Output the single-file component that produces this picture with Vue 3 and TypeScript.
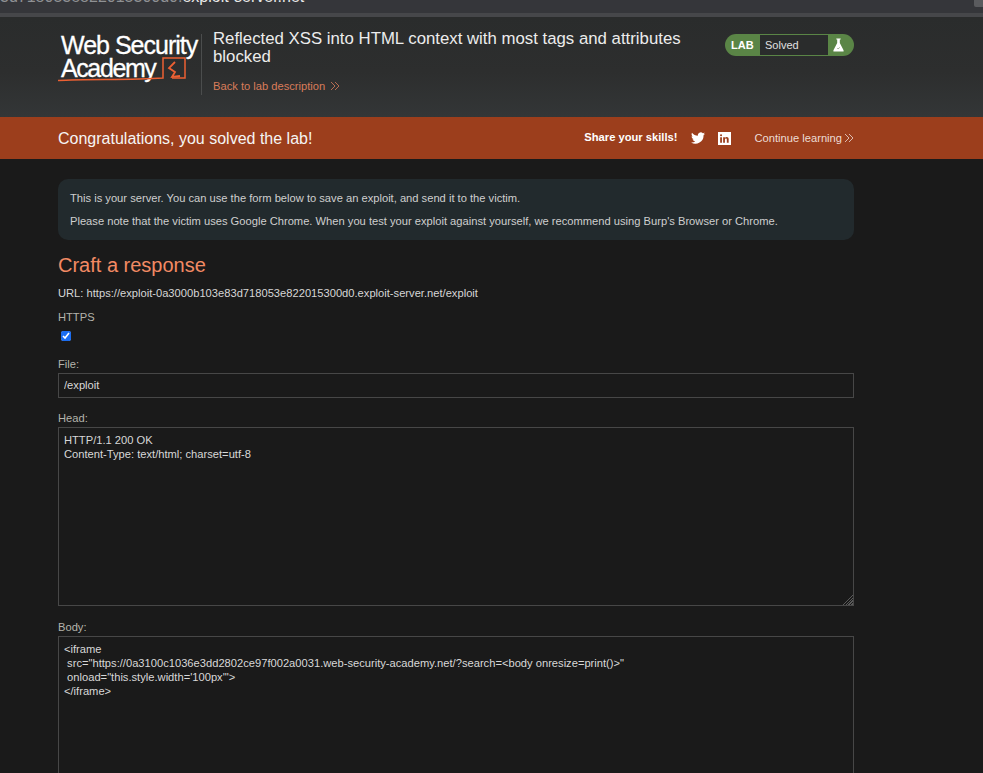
<script setup lang="ts">
import { ref } from 'vue'

const https = ref(true)
const file = ref('/exploit')
const head = ref('HTTP/1.1 200 OK\nContent-Type: text/html; charset=utf-8')
const body = ref(`<iframe
 src="https://0a3100c1036e3dd2802ce97f002a0031.web-security-academy.net/?search=<body onresize=print()>"
 onload="this.style.width='100px'">
</iframe>`)
</script>

<template>
  <div class="page">
    <div class="url-bar">
      <div class="url-text"><span class="url-dim">3d718053e822015300d0.</span>exploit-server.net</div>
      <div class="scroll-thumb"></div>
    </div>
    <div class="url-edge"></div>

    <header class="lab-header">
      <div class="wrap header-row">
        <div class="logo">
          <div class="logo-web">Web Security</div>
          <div class="logo-academy">Academy</div>
          <svg class="logo-mark" viewBox="0 0 130 44" fill="none">
            <path d="M0 38.500 C30 36.500 70 38.500 105 36 V16 H127 V36 H114" stroke="#ec6033" stroke-width="1.500" />
            <path d="M117 20 L111 26 L117 30 L114 35 L122 34" stroke="#ec6033" stroke-width="1.800" />
          </svg>
        </div>
        <div class="title-block">
          <h2 class="lab-title">Reflected XSS into HTML context with most tags and attributes blocked</h2>
          <a class="back-link" href="#">Back to lab description
            <svg class="chevrons" viewBox="0 0 10 10" fill="none"><path d="M1 1l4 4-4 4M5 1l4 4-4 4" stroke="currentColor" stroke-width="0.800" /></svg>
          </a>
        </div>
        <div class="lab-status">
          <span class="lab-word">LAB</span>
          <span class="lab-state">Solved</span>
          <span class="lab-icon">
            <svg viewBox="0 0 12 16" width="11" height="14">
              <path d="M3.500 0.500h5v1.200h-1v4l4.300 8.300v1.500H.2V14l4.300-8.300v-4h-1z" fill="#fff" />
              <path d="M4.500 11.500l1 1 2-1.800" stroke="#7c8f70" stroke-width="0.800" fill="none" />
            </svg>
          </span>
        </div>
      </div>
    </header>

    <section class="solved-bar">
      <div class="wrap solved-row">
        <h4 class="solved-msg">Congratulations, you solved the lab!</h4>
        <div class="share">
          <strong class="share-label">Share your skills!</strong>
          <svg class="social twitter" viewBox="0 0 24 24" width="14" height="14">
            <path fill="#fff" d="M24 4.560c-.9.400-1.800.660-2.800.800 1-.600 1.800-1.560 2.200-2.700-1 .560-2 .960-3.100 1.200A4.900 4.900 0 0 0 11.900 8.300C7.800 8.100 4.200 6.100 1.700 3.100c-1.300 2.300-.700 5.200 1.500 6.600-.800 0-1.600-.200-2.200-.600 0 2.400 1.700 4.500 3.900 5-.700.200-1.500.200-2.200.100.600 2 2.500 3.400 4.600 3.400A9.900 9.900 0 0 1 0 19.600 14 14 0 0 0 21.500 7.100c1-.700 1.800-1.600 2.500-2.540z" />
          </svg>
          <svg class="social linkedin" viewBox="0 0 24 24" width="13" height="13">
            <path fill="#fff" fill-rule="evenodd" d="M0 0h24v24H0zM4 9.500V20h3.300V9.500zM5.650 4.200a1.900 1.900 0 1 0 0 3.800 1.900 1.900 0 0 0 0-3.800zM9.500 9.500V20h3.300v-5.500c0-1.500.6-2.400 1.800-2.400s1.700.9 1.700 2.400V20h3.400v-6.400c0-2.900-1.500-4.400-3.700-4.400-1.500 0-2.600.7-3.200 1.700V9.500z" />
          </svg>
          <a class="continue" href="#">Continue learning
            <svg class="chevrons" viewBox="0 0 10 10" fill="none"><path d="M1 1l4 4-4 4M5 1l4 4-4 4" stroke="currentColor" stroke-width="0.800" /></svg>
          </a>
        </div>
      </div>
    </section>

    <main class="wrap content">
      <div class="info">
        <p>This is your server. You can use the form below to save an exploit, and send it to the victim.</p>
        <p>Please note that the victim uses Google Chrome. When you test your exploit against yourself, we recommend using Burp's Browser or Chrome.</p>
      </div>

      <h3 class="craft">Craft a response</h3>
      <div class="url-line">URL: https://exploit-0a3000b103e83d718053e822015300d0.exploit-server.net/exploit</div>

      <form class="exploit-form" @submit.prevent>
        <label class="field-label https-label" for="https">HTTPS</label>
        <input id="https" v-model="https" class="https-check" type="checkbox" />

        <label class="field-label file-label" for="file">File:</label>
        <input id="file" v-model="file" class="field file-input" type="text" />

        <label class="field-label" for="head">Head:</label>
        <textarea id="head" v-model="head" class="field head-area"></textarea>

        <label class="field-label" for="body">Body:</label>
        <textarea id="body" v-model="body" class="field body-area"></textarea>
      </form>
    </main>
  </div>
</template>

<style>
html,
body {
  margin: 0;
  background: #1a1a1a;
  overflow: hidden;
}
</style>

<style scoped>
* {
  box-sizing: border-box;
}

.page {
  height: 773px;
  overflow: hidden;
  background: #1a1a1a;
  color: #cfcfcf;
  font-family: "Liberation Sans", Arial, sans-serif;
  font-size: 11.170px;
}

.wrap {
  width: 796px;
  margin-left: 58px;
}

/* top strip, cut off by the window edge */
.url-bar {
  height: 13px;
  background: #35363a;
  display: flex;
  justify-content: space-between;
  overflow: hidden;
}

.url-text {
  margin-top: -13px;
  font-size: 16px;
  line-height: 20px;
  color: #e8e8e8;
  white-space: nowrap;
}

.url-dim {
  color: #8f9194;
}

.scroll-thumb {
  width: 9px;
  height: 7px;
  background: #5a5b5e;
  border-radius: 0 0 0 2px;
}

.url-edge {
  height: 4px;
  background: #46474a;
}

.lab-header {
  height: 100px;
  background: linear-gradient(180deg, #2a2c2c 0%, #2d2e2e 55%, #333637 100%);
}

.header-row {
  display: flex;
  padding-top: 13px;
}

.logo {
  position: relative;
  width: 142px;
  height: 61px;
  margin: 4px 0 0 2px;
  flex: none;
  color: #fff;
  border-right: 1px solid #4b4d4d;
  -webkit-text-stroke: 0.3px #fff;
}

.logo-web {
  font-size: 25px;
  line-height: 23px;
  letter-spacing: -1px;
  white-space: nowrap;
  margin-left: 1px;
}

.logo-academy {
  font-size: 25px;
  line-height: 23px;
  letter-spacing: -1.400px;
  white-space: nowrap;
  margin-left: 1px;
}

.logo-mark {
  position: absolute;
  left: -2px;
  top: 8px;
  width: 130px;
  height: 44px;
}

.title-block {
  width: 492px;
  margin-left: 11px;
  flex: none;
}

.lab-title {
  margin: 0;
  font-size: 16.800px;
  line-height: 18px;
  font-weight: 400;
  color: #ececec;
  height: 47px;
}

.back-link {
  display: flex;
  align-items: center;
  gap: 5px;
  margin-top: 2px;
  color: #d97c5a;
  text-decoration: none;
  line-height: 14px;
}

.chevrons {
  width: 10px;
  height: 10px;
}

.lab-status {
  margin: 4px 0 0 20px;
  width: 129px;
  height: 22px;
  display: flex;
  align-items: stretch;
  background: #5a8546;
  border-radius: 11px;
  overflow: hidden;
  flex: none;
}

.lab-word {
  width: 35px;
  padding-left: 6px;
  font-weight: 700;
  font-size: 11px;
  line-height: 22px;
  color: #fff;
}

.lab-state {
  width: 68px;
  margin: 1px 0;
  padding-left: 5px;
  background: #2a2c2c;
  font-size: 11px;
  line-height: 20px;
  color: #e0e0e0;
}

.lab-icon {
  flex: 1;
  padding: 4px 0 0 5px;
}

.solved-bar {
  height: 42px;
  background: #9c3e1c;
}

.solved-row {
  display: flex;
  align-items: center;
  justify-content: space-between;
  height: 42px;
}

.solved-msg {
  margin: 1px 0 0;
  font-size: 16px;
  font-weight: 400;
  color: #f5f5f5;
}

.share {
  display: flex;
  align-items: center;
}

.share-label {
  font-size: 11.200px;
  color: #fff;
  margin-top: -3px;
}

.social {
  flex: none;
}

.twitter {
  margin-left: 13px;
}

.linkedin {
  margin-left: 13px;
}

.continue {
  display: flex;
  align-items: center;
  gap: 2px;
  margin-left: 24px;
  color: #ecdcd5;
  text-decoration: none;
}

.content {
  padding-top: 20px;
}

.info {
  height: 61px;
  padding: 13px 12px 0;
  background: #222a2d;
  border-radius: 10px;
}

.info p {
  margin: 0 0 10px;
  line-height: 13px;
  color: #cfcfcf;
}

.craft {
  margin: 13px 0 0;
  font-size: 20px;
  line-height: 24px;
  font-weight: 400;
  color: #f28a64;
}

.url-line {
  margin-top: 9px;
  line-height: 14px;
  color: #d6d6d6;
}

.exploit-form {
  display: flex;
  flex-direction: column;
  align-items: flex-start;
}

.field-label {
  line-height: 14px;
  color: #b4b4ac;
}

.https-label {
  margin-top: 10px;
}

.https-check {
  margin: 7px 0 0 3px;
  width: 10px;
  height: 10px;
  accent-color: #1a6cf0;
}

.file-label {
  margin-top: 16px;
}

.field {
  display: block;
  width: 796px;
  margin: 2px 0 6px;
  background: #1a1a1a;
  border: 1px solid #474747;
  color: #d8d8d8;
  font-family: "Liberation Sans", Arial, sans-serif;
  font-size: 11.170px;
  line-height: 14px;
  outline: none;
}

.file-input {
  height: 25px;
  padding: 0 5px 2px;
  margin-bottom: 13px;
}

.head-area {
  height: 179px;
  padding: 5px;
  resize: vertical;
  margin-bottom: 14px;
}

.body-area {
  height: 179px;
  padding: 5px;
  resize: vertical;
}

.head-area::-webkit-resizer,
.body-area::-webkit-resizer {
  background:
    linear-gradient(135deg, #1a1a1a 50%, transparent 50%) right bottom / 11px 11px no-repeat,
    repeating-linear-gradient(135deg, #5a5a5a 0 1px, #1a1a1a 1px 2px) right bottom / 11px 11px no-repeat;
}
</style>
